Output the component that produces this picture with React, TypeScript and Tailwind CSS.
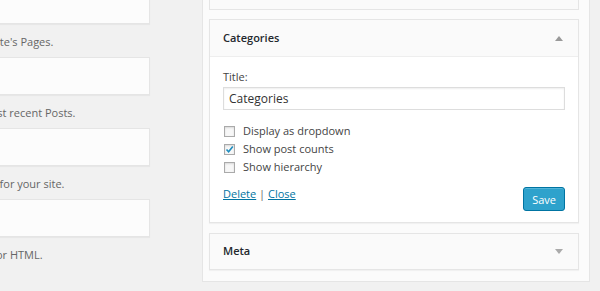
import React from 'react';

const descriptions = [
  "A list of your site's Pages.",
  "Your site's most recent Posts.",
  'A search form for your site.',
  'Arbitrary text or HTML.',
];

function Arrow({ up }: { up?: boolean }) {
  return (
    <svg width="8" height="5" viewBox="0 0 8 5" className="shrink-0">
      {up ? <path d="M0 5 L4 0 L8 5 Z" fill="#999" /> : <path d="M0 0 L8 0 L4 5 Z" fill="#aaa" />}
    </svg>
  );
}

function Checkbox({ label, checked }: { label: string; checked?: boolean }) {
  return (
    <label className="flex items-center h-[18px] text-[11px] text-[#444]">
      <span className="w-[11px] h-[11px] ml-[1px] mr-[8px] border border-[#aaa] bg-[#f7f7f7] shadow-[inset_0_1px_2px_rgba(0,0,0,0.12)] flex items-center justify-center">
        {checked && (
          <svg width="9" height="9" viewBox="0 0 9 9">
            <path d="M1.5 4.5 L3.6 6.8 L7.8 1.5" stroke="#1e8cbe" strokeWidth="1.6" fill="none" />
          </svg>
        )}
      </span>
      {label}
    </label>
  );
}

export default function App() {
  return (
    <div className="w-[600px] h-[291px] bg-[#f1f1f1] flex overflow-hidden font-['Open_Sans',sans-serif]">
      {/* Available widgets column, clipped on the left */}
      <div className="-ml-[75px] w-[225px] shrink-0 flex flex-col">
        <div className="-mt-[14px] h-[38px] bg-[#fcfcfc] border border-[#e5e5e5] shadow-[0_1px_1px_rgba(0,0,0,0.04)]" />
        {descriptions.map((d, i) => (
          <React.Fragment key={d}>
            {i > 0 && <div className="h-[38px] bg-[#fcfcfc] border border-[#e5e5e5] shadow-[0_1px_1px_rgba(0,0,0,0.04)]" />}
            <p className="h-[33px] pt-[9px] text-[11px] leading-[18px] text-[#666] whitespace-nowrap">{d}</p>
          </React.Fragment>
        ))}
      </div>

      {/* Sidebar area */}
      <div className="ml-[52px] w-[388px] h-[282px] shrink-0 bg-[#fbfbfb] border border-t-0 border-[#e5e5e5] pl-[6px] pr-[10px] flex flex-col">
        <div className="h-[10px] bg-[#fafafa] border border-t-0 border-[#e5e5e5]" />

        {/* Categories widget */}
        <div className="mt-[9px] border border-[#e5e5e5] bg-white shadow-[0_1px_1px_rgba(0,0,0,0.04)]">
          <div className="h-[37px] px-[13px] flex items-center justify-between bg-[#fafafa] border-b border-[#eee]">
            <span className="text-[11px] font-semibold text-[#23282d]">Categories</span>
            <span className="mr-[2px]"><Arrow up /></span>
          </div>
          <div className="px-[13px] pt-[11px] pb-[12px] h-[165px]">
            <p className="text-[11px] leading-[18px] text-[#444]">Title:</p>
            <div className="mt-[1px] h-[23px] border border-[#ddd] shadow-[inset_0_1px_2px_rgba(0,0,0,0.07)] px-[5px] flex items-center text-[12px] text-[#333]">
              Categories
            </div>
            <div className="mt-[12px] flex flex-col">
              <Checkbox label="Display as dropdown" />
              <Checkbox label="Show post counts" checked />
              <Checkbox label="Show hierarchy" />
            </div>
            <div className="mt-[9px] flex items-start justify-between">
              <p className="text-[11px] leading-[18px] text-[#666]">
                <span className="text-[#0074a2] underline">Delete</span>
                {' | '}
                <span className="text-[#0074a2] underline">Close</span>
              </p>
              <button className="mt-[2px] h-[24px] px-[8px] rounded-[3px] bg-[#2ea2cc] border border-[#0074a2] text-white text-[11px] leading-none shadow-[inset_0_1px_0_rgba(120,200,230,0.5)]">
                Save
              </button>
            </div>
          </div>
        </div>

        {/* Meta widget */}
        <div className="mt-[10px] h-[37px] px-[13px] flex items-center justify-between border border-[#e5e5e5] bg-[#fafafa] shadow-[0_1px_1px_rgba(0,0,0,0.04)]">
          <span className="text-[11px] font-semibold text-[#23282d]">Meta</span>
          <span className="mr-[2px]"><Arrow /></span>
        </div>
      </div>
    </div>
  );
}
